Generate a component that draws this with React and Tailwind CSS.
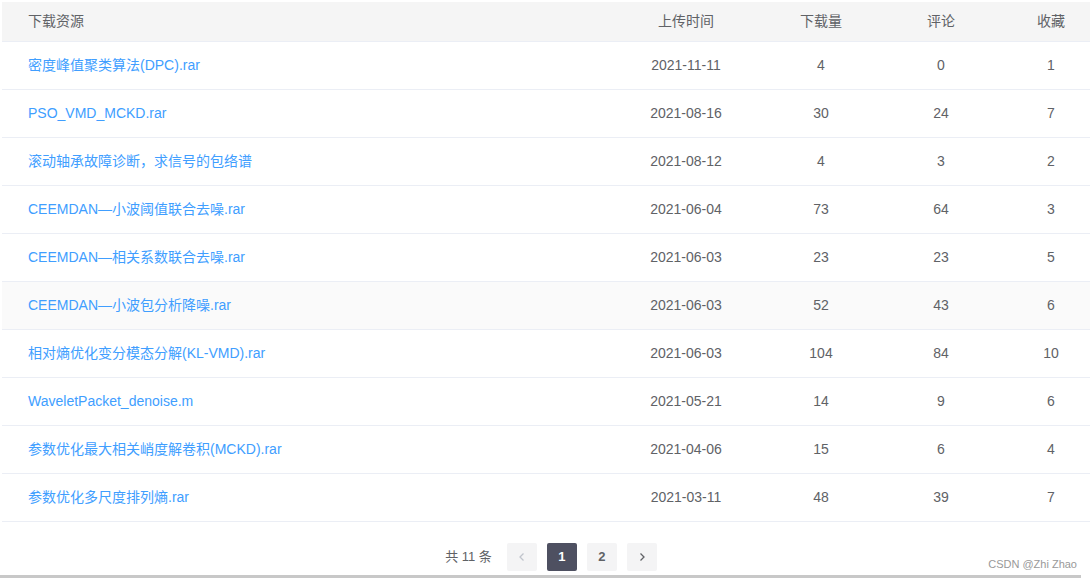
import React from 'react';

const rows = [
  ['密度峰值聚类算法(DPC).rar', '2021-11-11', 4, 0, 1],
  ['PSO_VMD_MCKD.rar', '2021-08-16', 30, 24, 7],
  ['滚动轴承故障诊断，求信号的包络谱', '2021-08-12', 4, 3, 2],
  ['CEEMDAN—小波阈值联合去噪.rar', '2021-06-04', 73, 64, 3],
  ['CEEMDAN—相关系数联合去噪.rar', '2021-06-03', 23, 23, 5],
  ['CEEMDAN—小波包分析降噪.rar', '2021-06-03', 52, 43, 6],
  ['相对熵优化变分模态分解(KL-VMD).rar', '2021-06-03', 104, 84, 10],
  ['WaveletPacket_denoise.m', '2021-05-21', 14, 9, 6],
  ['参数优化最大相关峭度解卷积(MCKD).rar', '2021-04-06', 15, 6, 4],
  ['参数优化多尺度排列熵.rar', '2021-03-11', 48, 39, 7],
];

const cols = 'grid grid-cols-[598px_172px_98px_142px_78px]';

const App = () => {
  return (
    <div
      className="relative w-[1091px] h-[578px] bg-white overflow-hidden text-[14px] text-[#606266]"
      style={{ fontFamily: '"Liberation Sans", "Noto Sans CJK SC", sans-serif' }}
    >
      <div className="pt-[2px] pl-[2px] pr-[1px]">
        {/* header */}
        <div className={`${cols} h-[40px] items-center bg-[#f5f5f5] border-b border-[#ebeef5]`}>
          <div className="pl-[26px]">下载资源</div>
          <div className="text-center">上传时间</div>
          <div className="text-center">下载量</div>
          <div className="text-center">评论</div>
          <div className="text-center">收藏</div>
        </div>

        {/* rows */}
        {rows.map((r, i) => (
          <div
            key={i}
            className={`${cols} h-[48px] items-center border-b border-[#ebeef5] ${i === 5 ? 'bg-[#fafafa]' : ''}`}
          >
            <div className="pl-[26px] text-[#409eff]">{r[0]}</div>
            <div className="text-center">{r[1]}</div>
            <div className="text-center">{r[2]}</div>
            <div className="text-center">{r[3]}</div>
            <div className="text-center">{r[4]}</div>
          </div>
        ))}

        {/* pagination */}
        <div className="flex justify-center items-center gap-[10px] mt-[21px] pl-[10px] text-[13px]">
          <span className="mr-[5px] text-[#606266]">共 11 条</span>
          <button className="w-[30px] h-[28px] rounded-[2px] bg-[#f4f4f5] text-[#c0c4cc] flex items-center justify-center">
            <svg width="10" height="10" viewBox="0 0 10 10" fill="none" stroke="currentColor" strokeWidth="1.3">
              <path d="M6.5 1.5L3 5l3.5 3.5" />
            </svg>
          </button>
          <button className="w-[30px] h-[28px] rounded-[2px] bg-[#4e5061] text-white font-bold">1</button>
          <button className="w-[30px] h-[28px] rounded-[2px] bg-[#f4f4f5] text-[#606266] font-bold">2</button>
          <button className="w-[30px] h-[28px] rounded-[2px] bg-[#f4f4f5] text-[#606266] flex items-center justify-center">
            <svg width="10" height="10" viewBox="0 0 10 10" fill="none" stroke="currentColor" strokeWidth="1.3">
              <path d="M3.5 1.5L7 5l-3.5 3.5" />
            </svg>
          </button>
        </div>
      </div>

      {/* watermark */}
      <div className="absolute right-[14px] bottom-[6px] text-[11px] text-[#999]">CSDN @Zhi Zhao</div>
      {/* bottom bar */}
      <div className="absolute left-0 bottom-0 w-[1081px] h-[3px] bg-[#c8c8c8]" />
    </div>
  );
};

export default App;
